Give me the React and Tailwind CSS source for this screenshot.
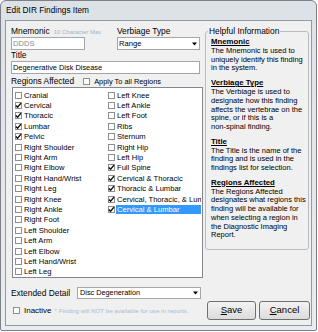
import React from "react";

const leftItems = [
  ["Cranial", false], ["Cervical", true], ["Thoracic", true], ["Lumbar", true], ["Pelvic", true],
  ["Right Shoulder", false], ["Right Arm", false], ["Right Elbow", false], ["Right Hand/Wrist", false],
  ["Right Leg", false], ["Right Knee", false], ["Right Ankle", false], ["Right Foot", false],
  ["Left Shoulder", false], ["Left Arm", false], ["Left Elbow", false], ["Left Hand/Wrist", false], ["Left Leg", false],
];
const rightItems = [
  ["Left Knee", false], ["Left Ankle", false], ["Left Foot", false], ["Ribs", false], ["Sternum", false],
  ["Right Hip", false], ["Left Hip", false], ["Full Spine", true], ["Cervical & Thoracic", true],
  ["Thoracic & Lumbar", true], ["Cervical, Thoracic, & Lumbar", true], ["Cervical & Lumbar", true, true],
];

const help = [
  ["Mnemonic", ["The Mnemonic is used to", "uniquely identify this finding", "in the system."]],
  ["Verbiage Type", ["The Verbiage is used to", "designate how this finding", "affects the vertebrae on the", "spine, or if this is a", "non-spinal finding."]],
  ["Title", ["The Title is the name of the", "finding and is used in the", "findings list for selection."]],
  ["Regions Affected", ["The Regions Affected", "designates what regions this", "finding will be available for", "when selecting a region in", "the Diagnostic Imaging", "Report."]],
];

function Check() {
  return (
    <svg width="7" height="7" viewBox="0 0 7 7" className="overflow-visible shrink-0">
      <path d="M0.8 3.4 L2.6 5.3 L6 1.1" fill="none" stroke="#111" strokeWidth="1.4" />
    </svg>
  );
}

function Box({ checked }) {
  return (
    <span className="w-[7px] h-[7px] shrink-0 border border-[#8e8f8f] bg-white flex items-center justify-center">
      {checked ? <Check /> : null}
    </span>
  );
}

function Item({ label, checked, selected }) {
  return (
    <div className="h-[10.4px] flex items-center">
      <Box checked={checked} />
      <span
        className={
          selected
            ? "ml-[1px] flex-1 h-[9px] leading-[9px] pl-[1px] bg-[#3399ff] text-white whitespace-nowrap overflow-hidden"
            : "ml-[1px] flex-1 h-[9px] leading-[9px] pl-[1px] whitespace-nowrap overflow-hidden"
        }
      >
        {label}
      </span>
    </div>
  );
}

function Arrow() {
  return (
    <span className="w-[9px] self-stretch flex items-center justify-center">
      <svg width="5" height="4" viewBox="0 0 5 4">
        <path d="M0 0.5 H5 L2.5 3.5 Z" fill="#000" />
      </svg>
    </span>
  );
}

export default function App() {
  return (
    <div className="w-[318px] h-[332px] bg-white font-['Liberation_Sans',Arial,sans-serif] text-black">
      <div className="w-[317px] h-[331px] rounded-t-[6px] rounded-b-[2px] border border-[#7d8186] bg-gradient-to-b from-[#dde2e8] to-[#e9ecf0] flex flex-col">
        <div className="h-[19px] shrink-0 flex items-center pl-[5px] text-[8.3px]">Edit DIR Findings Item</div>
        <div className="flex-1 mx-[4px] mb-[4px] border border-[#959aa1] bg-[#f0f0f0] flex">
          {/* left column */}
          <div className="w-[192px] ml-[5px] pt-[5px] flex flex-col">
            <div className="flex">
              <div className="w-[106px] flex flex-col">
                <div className="h-[11px] flex items-center gap-[4px]">
                  <span className="text-[8.4px]">Mnemonic</span>
                  <span className="text-[6px] text-[#9cb4cc] mt-[2px]">10 Character Max</span>
                </div>
                <div className="w-[74px] h-[13px] border border-[#a3a6ad] bg-white flex items-center pl-[1px] text-[7.6px] text-[#8a8a8a]">
                  DDDS
                </div>
              </div>
              <div className="flex flex-col">
                <div className="h-[11px] flex items-center text-[8.4px]">Verbiage Type</div>
                <div className="w-[83px] h-[13px] border border-[#a3a6ad] bg-white flex items-center">
                  <span className="flex-1 pl-[1px] text-[7.6px]">Range</span>
                  <Arrow />
                </div>
              </div>
            </div>
            <div className="h-[11px] flex items-center text-[8.4px]">Title</div>
            <div className="w-[189px] h-[13px] border border-[#a3a6ad] bg-white flex items-center pl-[1px] text-[7.4px]">
              Degenerative Disk Disease
            </div>
            <div className="h-[13px] pt-[2px] flex items-center">
              <span className="text-[8.4px]">Regions Affected</span>
              <span className="ml-[9px]"><Box checked={false} /></span>
              <span className="ml-[4px] text-[7.4px]">Apply To all Regions</span>
            </div>
            <div className="ml-[1px] w-[191px] h-[191px] border border-[#828790] bg-white pt-[2px] flex text-[7.6px]">
              <div className="w-[95px] pl-[2px] flex flex-col">
                {leftItems.map(([l, c]) => (
                  <Item key={l} label={l} checked={c} />
                ))}
              </div>
              <div className="w-[93px] flex flex-col overflow-hidden">
                {rightItems.map(([l, c, s]) => (
                  <Item key={l} label={l} checked={c} selected={s} />
                ))}
              </div>
            </div>
            <div className="mt-[9px] flex items-center">
              <span className="w-[66px] text-[8.4px]">Extended Detail</span>
              <div className="w-[124px] h-[12px] border border-[#a3a6ad] bg-white flex items-center">
                <span className="flex-1 pl-[2px] text-[7.3px]">Disc Degeneration</span>
                <Arrow />
              </div>
            </div>
            <div className="mt-[7px] h-[8px] flex items-center">
              <span className="ml-[2px]"><Box checked={false} /></span>
              <span className="ml-[4px] text-[8px]">Inactive</span>
              <span className="ml-[3px] text-[6.2px] text-[#a3bdd7] whitespace-nowrap">* Finding will NOT be available for use in reports.</span>
            </div>
          </div>
          {/* right column */}
          <div className="w-[105px] ml-[2px] pt-[5px] flex flex-col">
            <fieldset className="w-[104px] h-[224px] border border-[#b9bdc2] rounded-[3px] pl-[5px]">
              <legend className="ml-[-3px] px-[1px] text-[8.4px] leading-[11px]">Helpful Information</legend>
              {help.map(([h, lines], i) => (
                <div key={h} className={i === 0 ? "" : "mt-[5px]"}>
                  <div className="text-[7.8px] leading-[9px] font-bold underline whitespace-nowrap">{h}</div>
                  <div className="mt-[1px] text-[7.5px] leading-[8.7px]">
                    {lines.map((t) => (
                      <div key={t} className="whitespace-nowrap">{t}</div>
                    ))}
                  </div>
                </div>
              ))}
            </fieldset>
            <div className="mt-auto mb-[5px] pl-[2px] flex gap-[3px]">
              <button className="w-[49px] h-[19px] rounded-[3px] border border-[#707070] bg-gradient-to-b from-[#f3f3f3] to-[#dcdcdc] text-[9.5px] flex items-center justify-center">
                <span><span className="underline">S</span>ave</span>
              </button>
              <button className="w-[51px] h-[19px] rounded-[3px] border border-[#707070] bg-gradient-to-b from-[#f3f3f3] to-[#dcdcdc] text-[9.5px] flex items-center justify-center">
                <span><span className="underline">C</span>ancel</span>
              </button>
            </div>
          </div>
        </div>
      </div>
    </div>
  );
}
